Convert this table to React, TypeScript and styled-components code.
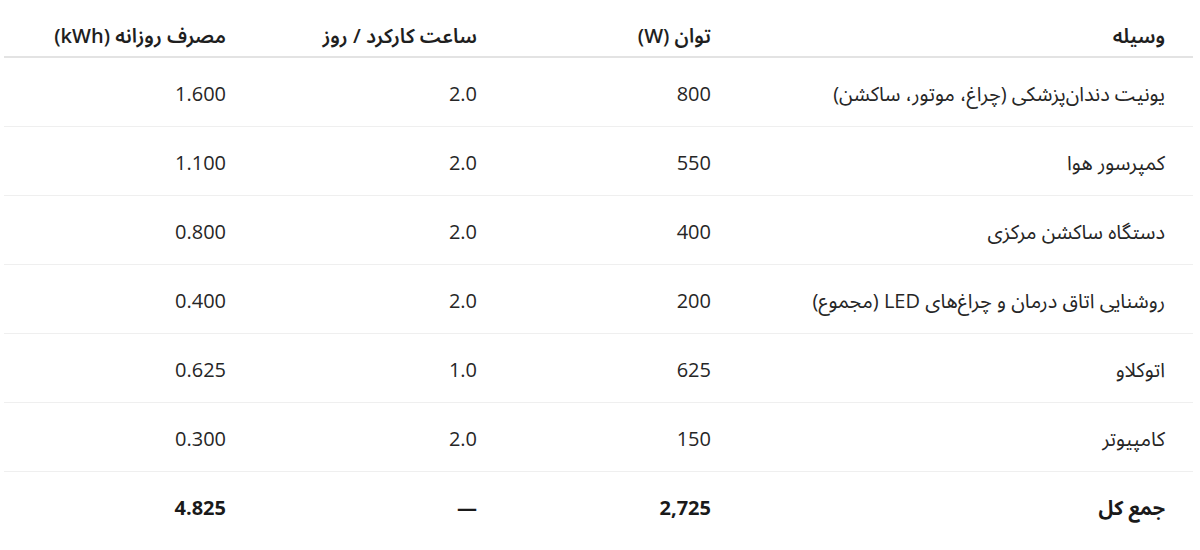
import React from "react";
import styled, {createGlobalStyle} from "styled-components";

const GlobalStyle = createGlobalStyle`
  *, *::before, *::after {
    box-sizing: border-box;
  }
  body {
    margin: 0;
    background: #ffffff;
    font-family: "Open Sans", "Noto Sans Arabic", "DejaVu Sans", sans-serif;
  }
`;

const Wrapper = styled.div`
  padding: 12px 6px 0 4px;
`;

const Table = styled.table`
  direction: rtl;
  width: 1189px;
  border-collapse: collapse;
  table-layout: fixed;
  font-size: 20px;
  line-height: 30px;
  color: #262626;
`;

const HeadCell = styled.th<{w: number}>`
  width: ${(p) => p.w}px;
  padding: 9px 28px 5px;
  text-align: right;
  font-weight: 600;
  color: #1f1f1f;
  border-bottom: 2px solid #e3e3e3;
`;

const Row = styled.tr<{total?: boolean}>`
  border-bottom: ${(p) => (p.total ? "none" : "1px solid #efefef")};
  font-weight: ${(p) => (p.total ? 700 : 400)};
  color: ${(p) => (p.total ? "#1a1a1a" : "#262626")};
`;

const Cell = styled.td`
  padding: 21px 28px 17px;
  text-align: right;
  white-space: nowrap;
`;

const columns = [
  {label: "وسیله", w: 454},
  {label: "توان (W)", w: 234},
  {label: "ساعت کارکرد / روز", w: 251},
  {label: "مصرف روزانه (kWh)", w: 250},
];

const rows = [
  ["یونیت دندان‌پزشکی (چراغ، موتور، ساکشن)", "800", "2.0", "1.600"],
  ["کمپرسور هوا", "550", "2.0", "1.100"],
  ["دستگاه ساکشن مرکزی", "400", "2.0", "0.800"],
  ["روشنایی اتاق درمان و چراغ‌های LED (مجموع)", "200", "2.0", "0.400"],
  ["اتوکلاو", "625", "1.0", "0.625"],
  ["کامپیوتر", "150", "2.0", "0.300"],
];

export default function App() {
  return (
    <>
      <GlobalStyle />
      <Wrapper>
        <Table>
          <thead>
            <tr>
              {columns.map((c) => (
                <HeadCell key={c.label} w={c.w}>
                  {c.label}
                </HeadCell>
              ))}
            </tr>
          </thead>
          <tbody>
            {rows.map((r) => (
              <Row key={r[0]}>
                {r.map((v, i) => (
                  <Cell key={i}>{v}</Cell>
                ))}
              </Row>
            ))}
            <Row total>
              <Cell>جمع کل</Cell>
              <Cell>2,725</Cell>
              <Cell>—</Cell>
              <Cell>4.825</Cell>
            </Row>
          </tbody>
        </Table>
      </Wrapper>
    </>
  );
}
